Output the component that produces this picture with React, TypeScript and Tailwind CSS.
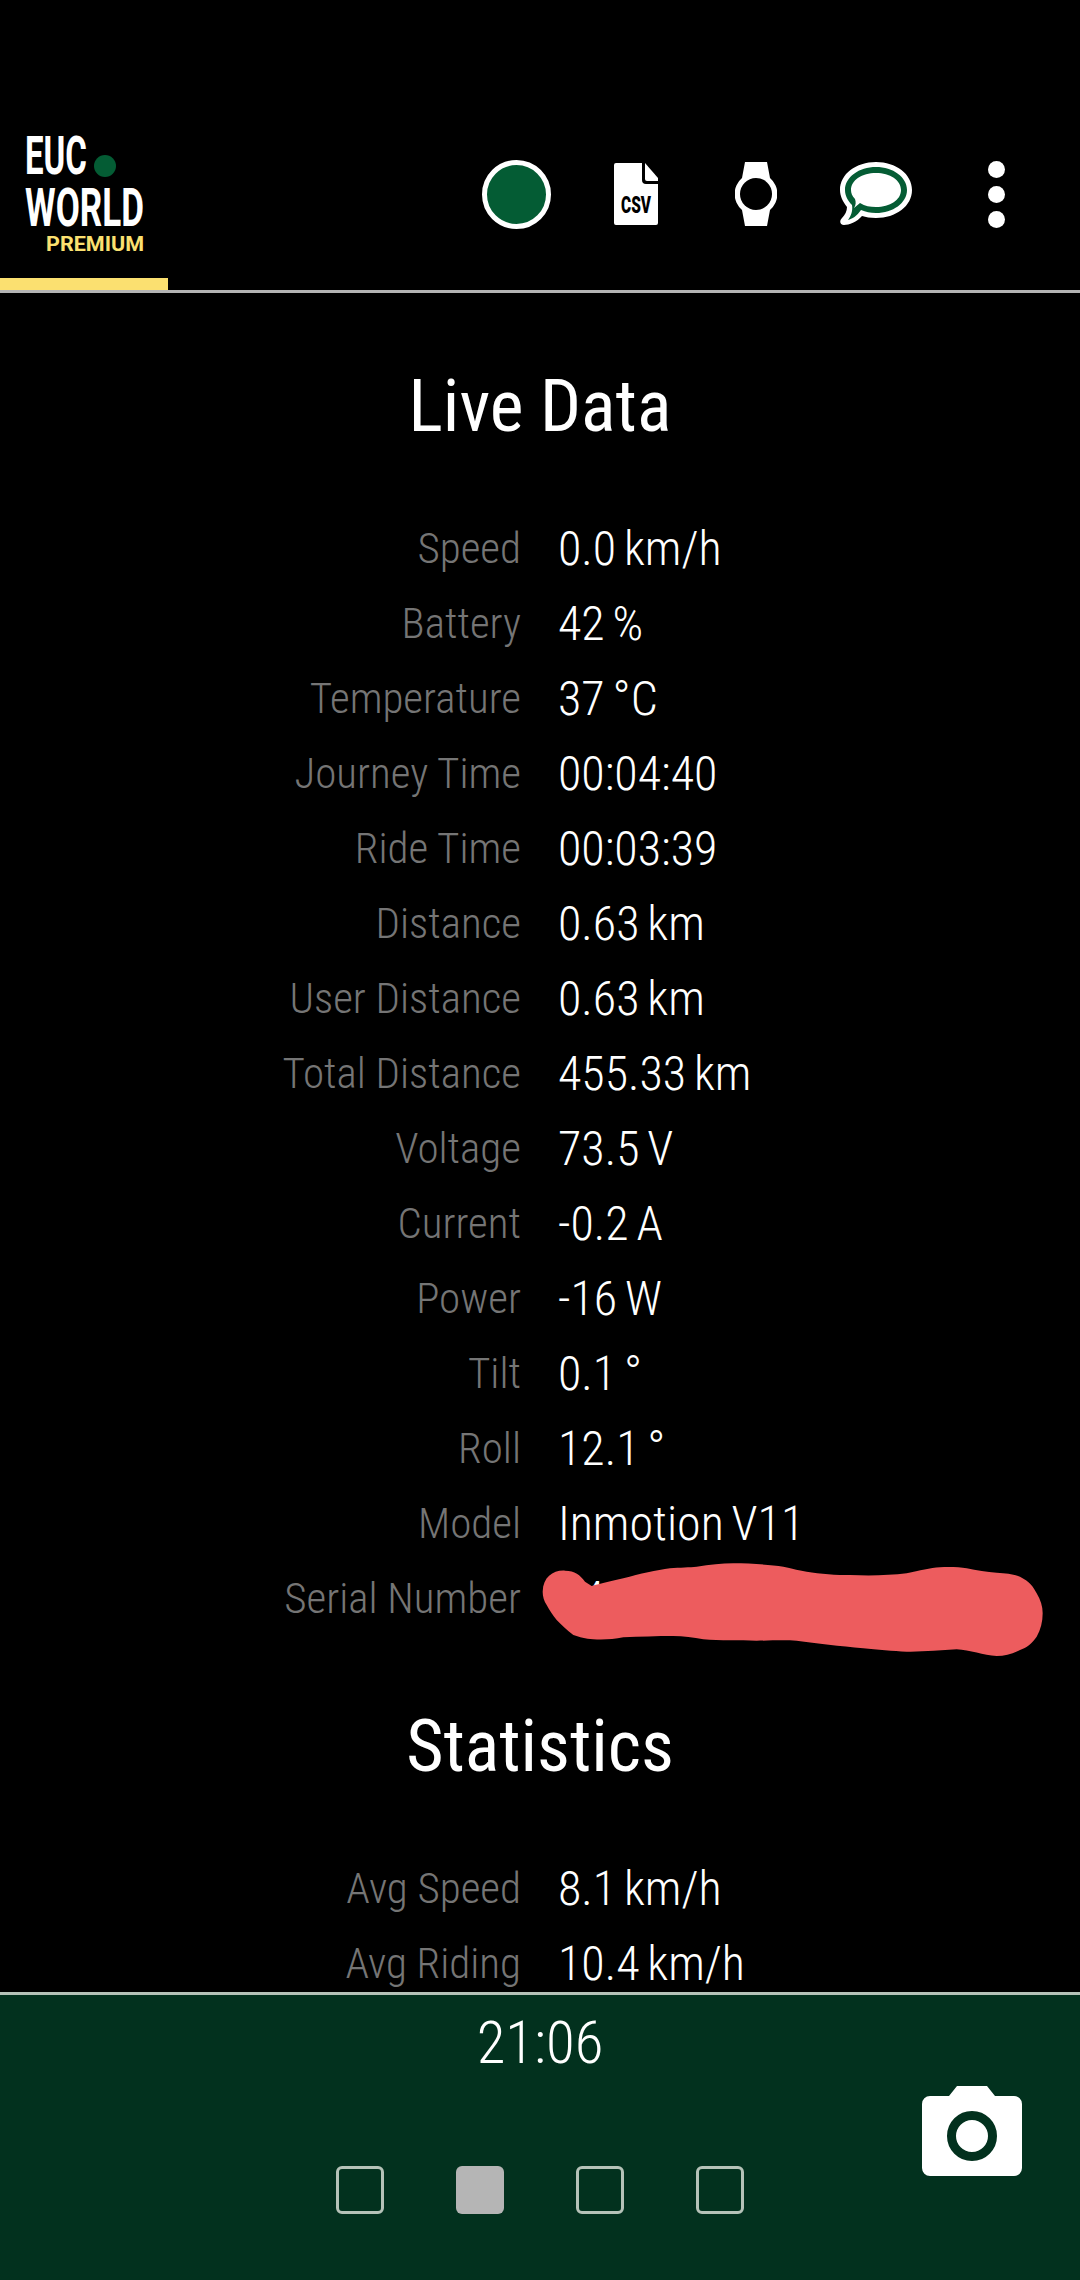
const liveData = [
  ["Speed", "0.0 km/h"],
  ["Battery", "42 %"],
  ["Temperature", "37 °C"],
  ["Journey Time", "00:04:40"],
  ["Ride Time", "00:03:39"],
  ["Distance", "0.63 km"],
  ["User Distance", "0.63 km"],
  ["Total Distance", "455.33 km"],
  ["Voltage", "73.5 V"],
  ["Current", "-0.2 A"],
  ["Power", "-16 W"],
  ["Tilt", "0.1 °"],
  ["Roll", "12.1 °"],
  ["Model", "Inmotion V11"],
];

const statistics = [
  ["Avg Speed", "8.1 km/h"],
  ["Avg Riding", "10.4 km/h"],
];

const Logo = () => (
  <svg width="200" height="130" viewBox="0 0 200 130" className="ml-[20px] mt-[128px] shrink-0">
    <text x="5" y="46" fontFamily="Roboto, sans-serif" fontWeight="700" fontSize="53" fill="#fff" textLength="62" lengthAdjust="spacingAndGlyphs">EUC</text>
    <circle cx="85" cy="38" r="11" fill="#045c34" />
    <text x="5" y="98" fontFamily="Roboto, sans-serif" fontWeight="700" fontSize="54" fill="#fff" textLength="119" lengthAdjust="spacingAndGlyphs">WORLD</text>
    <text x="26" y="123" fontFamily="Roboto, sans-serif" fontWeight="700" fontSize="20" fill="#fbe070" textLength="98" lengthAdjust="spacingAndGlyphs">PREMIUM</text>
  </svg>
);

const Row = ({ label, value }: { label: string; value: string }) => (
  <div className="flex h-[75px] items-center pt-[2px] font-light leading-none whitespace-nowrap [font-stretch:75%]">
    <div className="w-[521px] text-right text-[43px] text-[#757575]">{label}</div>
    <div className="pl-[37px] text-[48px] text-white [word-spacing:-3px]">{value}</div>
  </div>
);

const Heading = ({ title, className }: { title: string; className: string }) => (
  <h2 className={`flex h-[100px] items-center justify-center pt-[3px] text-[72px] text-white [font-stretch:75%] ${className}`}>
    {title}
  </h2>
);

const App = () => {
  return (
    <div className="flex h-[2280px] w-[1080px] flex-col overflow-hidden bg-black font-['Roboto',sans-serif]">
      <header className="relative flex h-[293px] shrink-0 items-start justify-between border-b-[3px] border-[#b4b4b4]">
        <Logo />
        <div className="absolute bottom-0 left-0 h-[12px] w-[168px] bg-[#fbe070]" />
        <div className="mt-[154px] flex pr-[24px]">
          <div className="flex h-[80px] w-[120px] items-center justify-center">
            <div className="h-[69px] w-[69px] rounded-full border-[5px] border-white bg-[#045c34]" />
          </div>
          <div className="flex h-[80px] w-[120px] items-center justify-center">
            <svg width="44" height="62" viewBox="0 0 44 62">
              <path d="M2 0H28V17a4 4 0 0 0 4 4H44V60a2 2 0 0 1-2 2H2a2 2 0 0 1-2-2V2a2 2 0 0 1 2-2Z" fill="#fff" />
              <path d="M31 0L44 15V18H33a2 2 0 0 1-2-2Z" fill="#fff" />
              <text x="7" y="50" fontFamily="Roboto, sans-serif" fontWeight="900" fontSize="23" fill="#000" textLength="30" lengthAdjust="spacingAndGlyphs">CSV</text>
            </svg>
          </div>
          <div className="flex h-[80px] w-[120px] items-center justify-center">
            <svg width="42" height="64" viewBox="0 0 42 64">
              <path d="M10 0H32L35 16A21 21 0 0 1 35 48L32 64H10L7 48A21 21 0 0 1 7 16Z" fill="#fff" />
              <circle cx="21" cy="32" r="16" fill="#000" />
            </svg>
          </div>
          <div className="flex h-[80px] w-[120px] items-center justify-center">
            <svg width="72" height="64" viewBox="0 0 72 64">
              <path d="M36 0C56 0 72 12 72 28S56 56 36 56C30 56 26 55 22 54C17 60 9 63 4 63C0 63-1 59 2 56C5 53 7 49 7 45C3 40 0 34 0 28C0 12 16 0 36 0Z" fill="#fff" />
              <path d="M36 5C53 5 67 15 67 28S53 51 36 51C30 51 26 50 21 48C17 54 12 57 8 58C11 54 13 49 12 43C8 39 5 34 5 28C5 15 19 5 36 5Z" fill="#045c34" />
              <path d="M36 11C50 11 61 18 61 28S50 45 36 45C30 45 25 44 20 41L14 46C16 43 16 40 15 37C12 34 11 31 11 28C11 18 22 11 36 11Z" fill="#fff" />
            </svg>
          </div>
          <div className="flex h-[80px] w-[120px] flex-col items-center justify-center gap-[8px]">
            <div className="h-[17px] w-[17px] rounded-full bg-white" />
            <div className="h-[17px] w-[17px] rounded-full bg-white" />
            <div className="h-[17px] w-[17px] rounded-full bg-white" />
          </div>
        </div>
      </header>

      <main className="min-h-0 flex-1 overflow-hidden">
        <Heading title="Live Data" className="mt-[62px] mb-[55px]" />
        {liveData.map(([label, value]) => (
          <Row key={label} label={label} value={value} />
        ))}
        <div className="relative">
          <Row label="Serial Number" value="14" />
          {/* scribbled over by whoever took the screenshot */}
          <svg width="520" height="120" viewBox="0 0 1560 360" className="absolute left-[530px] top-[-10px]">
            <path
              d="M38 125C40 80 70 60 105 62C135 62 150 75 165 95L185 108C210 102 245 92 280 85C330 72 380 60 420 55C450 52 480 52 500 50C540 44 575 40 610 40C660 40 720 44 760 50C790 56 810 62 830 65C870 72 920 75 960 75C1020 78 1080 76 1130 70C1170 62 1200 54 1230 52C1260 50 1290 52 1310 55C1340 62 1370 66 1400 68C1430 70 1450 72 1470 80C1500 95 1510 110 1520 130C1532 150 1538 170 1538 190C1538 215 1532 240 1520 260C1505 282 1490 292 1470 300C1445 312 1425 318 1400 318C1360 316 1320 300 1280 298C1230 300 1180 306 1130 305C1090 304 1040 298 1000 295C930 288 860 280 800 272C760 270 720 272 680 272C630 272 570 272 520 268C490 262 460 258 430 258C380 258 330 260 280 262C250 268 220 270 190 268C165 266 150 262 130 255C110 240 95 225 80 210C68 195 58 180 50 165C42 152 38 140 38 125Z"
              fill="#ed5c5e"
            />
          </svg>
        </div>
        <Heading title="Statistics" className="mt-[60px] mb-[55px]" />
        {statistics.map(([label, value]) => (
          <Row key={label} label={label} value={value} />
        ))}
      </main>

      <footer className="relative flex h-[288px] shrink-0 flex-col items-center border-t-[3px] border-[#b5c2b8] bg-[#02311e]">
        <div className="mt-[13px] text-[59px] font-light leading-[70px] text-white [font-stretch:75%]">21:06</div>
        <div className="mt-[88px] flex gap-[72px]">
          <div className="h-[48px] w-[48px] rounded-[6px] border-[3px] border-[#b5c2b8]" />
          <div className="h-[48px] w-[48px] rounded-[6px] bg-[#b5b5b5]" />
          <div className="h-[48px] w-[48px] rounded-[6px] border-[3px] border-[#b5c2b8]" />
          <div className="h-[48px] w-[48px] rounded-[6px] border-[3px] border-[#b5c2b8]" />
        </div>
        <svg width="100" height="90" viewBox="0 0 100 90" className="absolute left-[922px] top-[91px]">
          <path d="M27 10L35 0H65L73 10H92a8 8 0 0 1 8 8V82a8 8 0 0 1-8 8H8a8 8 0 0 1-8-8V18a8 8 0 0 1 8-8Z" fill="#fff" />
          <circle cx="50" cy="50" r="20.5" fill="none" stroke="#02311e" strokeWidth="9" />
        </svg>
      </footer>
    </div>
  );
};

export default App;
